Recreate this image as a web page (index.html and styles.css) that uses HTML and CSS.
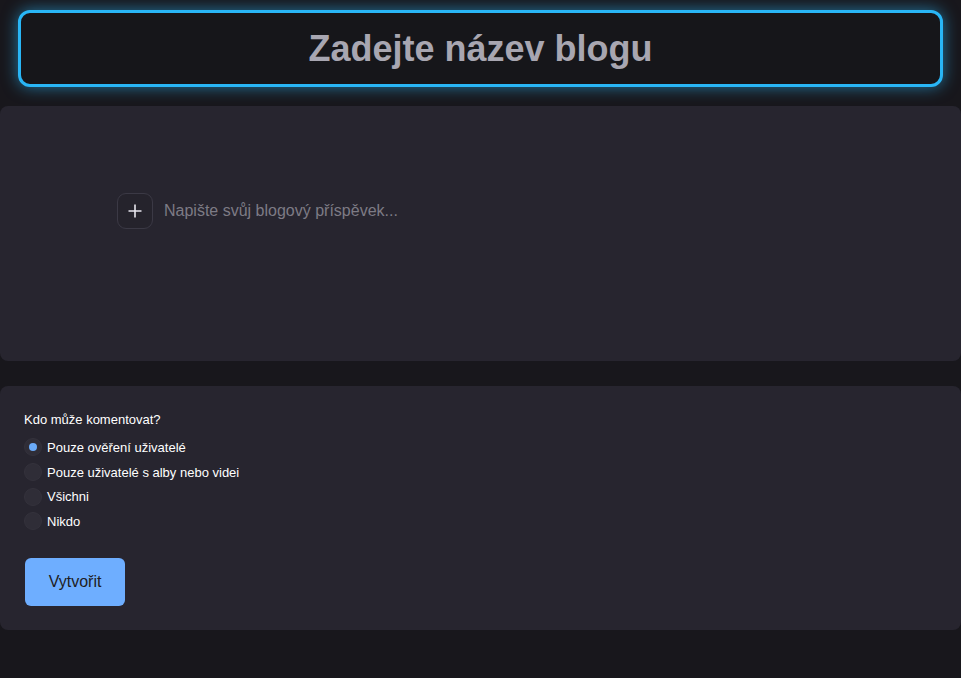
FILE: index.html
```html
<!DOCTYPE html>
<html lang="cs">
<head>
<meta charset="utf-8">
<title>Blog</title>
<link rel="stylesheet" href="styles.css">
</head>
<body>
<div class="page">
  <div class="title-wrap">
    <div class="title-box">Zadejte název blogu</div>
  </div>
  <section class="editor">
    <div class="editor-line">
      <button class="plus" type="button" aria-label="Přidat">
        <svg width="16" height="16" viewBox="0 0 16 16"><path d="M8 1.5v13M1.5 8h13" stroke="#e8e6ee" stroke-width="1.6" fill="none"/></svg>
      </button>
      <span class="placeholder">Napište svůj blogový příspěvek...</span>
    </div>
  </section>
  <section class="options">
    <div class="question">Kdo může komentovat?</div>
    <ul class="radios">
      <li class="radio-row"><span class="radio checked"></span><span>Pouze ověření uživatelé</span></li>
      <li class="radio-row"><span class="radio"></span><span>Pouze uživatelé s alby nebo videi</span></li>
      <li class="radio-row"><span class="radio"></span><span>Všichni</span></li>
      <li class="radio-row"><span class="radio"></span><span>Nikdo</span></li>
    </ul>
    <button class="create" type="button">Vytvořit</button>
  </section>
</div>
</body>
</html>
```
FILE: styles.css
```css
html, body {
  margin: 0;
  padding: 0;
  background: #18171c;
  font-family: "Liberation Sans", Arial, sans-serif;
}
.page {
  display: flex;
  flex-direction: column;
  padding-top: 10px;
}
.title-wrap {
  padding: 0 18px;
}
.title-box {
  height: 71px;
  border: 3px solid #29b6f6;
  border-radius: 12px;
  background: #16161a;
  box-shadow: 0 0 16px rgba(41, 182, 246, 0.6);
  display: flex;
  align-items: center;
  justify-content: center;
  color: #a8a6b1;
  font-weight: bold;
  font-size: 36px;
}
.editor {
  margin-top: 19px;
  height: 255px;
  background: #27252f;
  border-radius: 8px;
  padding: 87px 0 0 117px;
  box-sizing: border-box;
}
.editor-line {
  display: flex;
  align-items: center;
  gap: 11px;
}
.plus {
  width: 36px;
  height: 36px;
  border: 1px solid #3b3945;
  border-radius: 9px;
  background: #25232c;
  display: flex;
  align-items: center;
  justify-content: center;
  padding: 0;
}
.placeholder {
  color: #7d7b85;
  font-size: 16px;
}
.options {
  margin-top: 25px;
  background: #27252f;
  border-radius: 8px;
  padding: 26px 24px 24px 24px;
  color: #ffffff;
  font-size: 13px;
}
.question {
  line-height: 16px;
}
.radios {
  list-style: none;
  margin: 7px 0 0 0;
  padding: 0;
}
.radio-row {
  display: flex;
  align-items: center;
  gap: 5px;
  height: 24.7px;
}
.radio {
  width: 16px;
  height: 16px;
  border-radius: 50%;
  background: #2f2d37;
  border: 1px solid #34323c;
  display: flex;
  align-items: center;
  justify-content: center;
}
.radio.checked::after {
  content: "";
  width: 8px;
  height: 8px;
  border-radius: 50%;
  background: #6aaaf8;
}
.create {
  margin: 24px 0 0 1px;
  width: 100px;
  height: 48px;
  border: none;
  border-radius: 6px;
  background: #6eaeff;
  color: #1e1d24;
  font-family: "Liberation Sans", Arial, sans-serif;
  font-size: 16px;
}
```
